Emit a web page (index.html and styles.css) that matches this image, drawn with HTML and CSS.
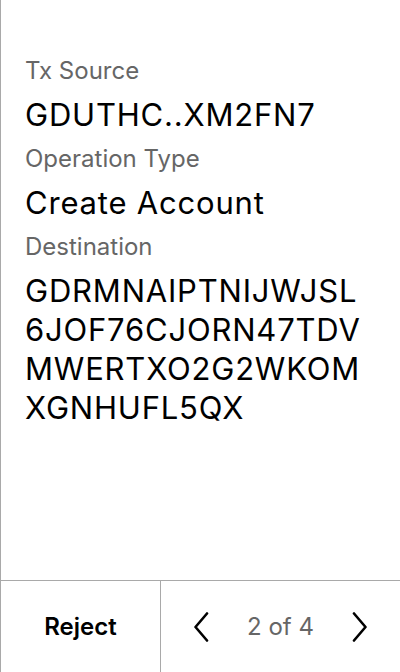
FILE: index.html
```html
<!DOCTYPE html>
<html>
<head>
<meta charset="utf-8">
<link rel="stylesheet" href="styles.css">
</head>
<body>
<div class="screen">
  <div class="content">
    <div class="field">
      <div class="label">Tx Source</div>
      <div class="value">GDUTHC..XM2FN7</div>
    </div>
    <div class="field">
      <div class="label">Operation Type</div>
      <div class="value">Create Account</div>
    </div>
    <div class="field">
      <div class="label">Destination</div>
      <div class="value long">GDRMNAIPTNIJWJSL<br>6JOF76CJORN47TDV<br>MWERTXO2G2WKOM<br>XGNHUFL5QX</div>
    </div>
  </div>
  <div class="bar">
    <div class="reject">Reject</div>
    <div class="nav">
      <svg class="chev" width="16" height="30" viewBox="0 0 16 30"><path d="M14 1.5 L2.5 15 L14 28.5" fill="none" stroke="#000" stroke-width="2.6" stroke-linecap="round" stroke-linejoin="round"/></svg>
      <span class="page">2 of 4</span>
      <svg class="chev" width="16" height="30" viewBox="0 0 16 30"><path d="M2 1.5 L13.5 15 L2 28.5" fill="none" stroke="#000" stroke-width="2.6" stroke-linecap="round" stroke-linejoin="round"/></svg>
    </div>
  </div>
</div>
</body>
</html>
```
FILE: styles.css
```css
html, body {
  margin: 0;
  padding: 0;
  background: #fff;
}
body {
  font-family: Inter, "Noto Sans", sans-serif;
  color: #000;
}
.screen {
  width: 400px;
  height: 672px;
  display: flex;
  flex-direction: column;
  border-left: 1px solid #a9a9a9;
  box-sizing: border-box;
}
.content {
  flex: 1;
  padding: 57px 0 0 24px;
}
.field {
  margin-bottom: 11px;
}
.label {
  font-size: 24px;
  line-height: 28px;
  color: #666;
  margin-bottom: 10px;
}
.value {
  font-size: 31px;
  line-height: 39px;
  letter-spacing: 0.8px;
}
.bar {
  height: 92px;
  border-top: 1px solid #a9a9a9;
  display: flex;
  box-sizing: border-box;
}
.reject {
  width: 159px;
  border-right: 1px solid #a9a9a9;
  display: flex;
  align-items: center;
  justify-content: center;
  font-size: 24px;
  font-weight: 600;
}
.nav {
  flex: 1;
  display: flex;
  align-items: center;
  justify-content: space-between;
  padding: 0 32px;
}
.page {
  font-size: 24px;
  color: #666;
}
.chev {
  display: block;
}
```
